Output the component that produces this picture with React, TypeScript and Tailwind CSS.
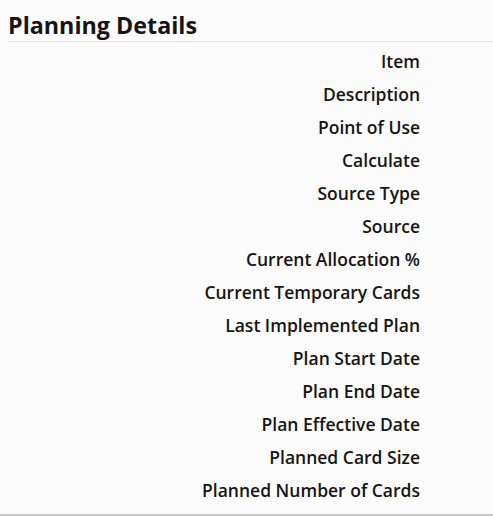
import React from "react";

const labels = [
  "Item",
  "Description",
  "Point of Use",
  "Calculate",
  "Source Type",
  "Source",
  "Current Allocation %",
  "Current Temporary Cards",
  "Last Implemented Plan",
  "Plan Start Date",
  "Plan End Date",
  "Plan Effective Date",
  "Planned Card Size",
  "Planned Number of Cards",
];

export default function App() {
  return (
    <div
      className="w-[493px] h-[516px] bg-[#fbfbfb] flex flex-col text-[#161513] overflow-hidden"
      style={{ fontFamily: "'Open Sans', Lato, sans-serif" }}
    >
      <div className="ml-[8px] border-b border-[#e6e6e6] h-[42px] flex items-end pb-[1px]">
        <h1 className="text-[23.3px] leading-[30px] font-bold">Planning Details</h1>
      </div>
      <div className="flex flex-col pt-[3px] w-[420px]">
        {labels.map((l) => (
          <div key={l} className="h-[33px] flex items-center justify-end text-[17.5px] font-semibold">
            {l}
          </div>
        ))}
      </div>
      <div className="flex-1" />
      <div className="h-[2px] bg-[#c8c8c8]" />
    </div>
  );
}
